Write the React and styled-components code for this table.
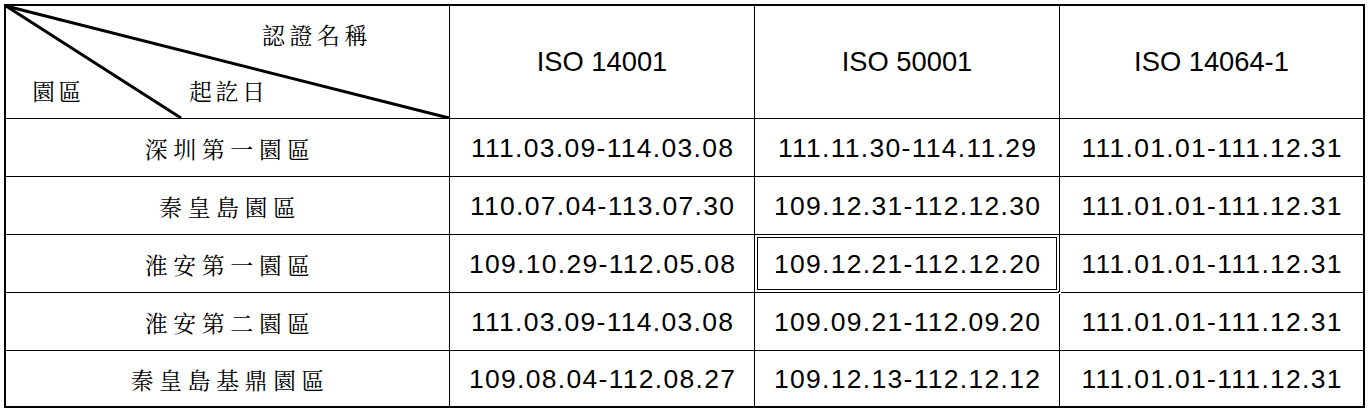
import React from "react";
import styled, { createGlobalStyle } from "styled-components";

const Global = createGlobalStyle`
  html, body { margin: 0; padding: 0; background: #ffffff; }
  body { font-family: "Liberation Sans", Arial, sans-serif; color: #000; }
`;

const Frame = styled.div`
  margin: 4px 0 0 4px;
  width: 1357px;
  border: 2px solid #000;
  display: grid;
  grid-template-columns: 443px 304px 304px 303px;
  grid-template-rows: 112px 57px 57px 57px 57px 55px;
  gap: 1px;
  background: #000;
`;

const Cell = styled.div`
  background: #fff;
  display: flex;
  align-items: center;
  justify-content: center;
  position: relative;
  ${(p) => p.$selected && `outline: 1px solid #000; outline-offset: -3px;`}
`;

const CornerCell = styled.div`
  background: #fff;
  position: relative;
  display: flex;
  flex-direction: column;
  padding: 14px 0 0 26px;
  box-sizing: border-box;
`;

const Diagonal = styled.svg`
  position: absolute;
  left: 0;
  top: 0;
  overflow: visible;
`;

const CjkText = styled.span`
  font-family: "Noto Serif CJK TC", "Noto Sans CJK TC", sans-serif;
  font-size: ${(p) => p.$size || 22}px;
  line-height: 30px;
  letter-spacing: ${(p) => p.$spacing || 5}px;
  white-space: nowrap;
`;

const TopLabel = styled(CjkText)`
  margin-left: 230px;
`;

const BottomLine = styled.div`
  display: flex;
  margin-top: 26px;
  gap: 104px;
`;

const HeadText = styled.span`
  font-family: "Liberation Sans", Arial, sans-serif;
  font-size: 27.3px;
  white-space: nowrap;
`;

const DateText = styled.span`
  font-family: "Liberation Sans", Arial, sans-serif;
  font-size: 26.5px;
  letter-spacing: 1.3px;
  margin-right: -1.3px;
  padding-top: 2px;
  white-space: nowrap;
`;

const RowLabel = styled(CjkText)`
  margin-right: -5.5px;
  padding-top: 3px;
`;

const Handle = styled.span`
  position: absolute;
  right: -3px;
  bottom: -3px;
  width: 4px;
  height: 4px;
  background: #fff;
  border: 1px solid #000;
  box-sizing: border-box;
`;

const rows = [
  ["深圳第一園區", "111.03.09-114.03.08", "111.11.30-114.11.29", "111.01.01-111.12.31"],
  ["秦皇島園區", "110.07.04-113.07.30", "109.12.31-112.12.30", "111.01.01-111.12.31"],
  ["淮安第一園區", "109.10.29-112.05.08", "109.12.21-112.12.20", "111.01.01-111.12.31"],
  ["淮安第二園區", "111.03.09-114.03.08", "109.09.21-112.09.20", "111.01.01-111.12.31"],
  ["秦皇島基鼎園區", "109.08.04-112.08.27", "109.12.13-112.12.12", "111.01.01-111.12.31"],
];

export default function App() {
  return (
    <>
      <Global />
      <Frame>
        <CornerCell>
          <Diagonal width="443" height="112" viewBox="0 0 443 112">
            <line x1="0" y1="0" x2="443" y2="112" stroke="#000" strokeWidth="3" />
            <line x1="0" y1="0" x2="175" y2="112" stroke="#000" strokeWidth="3" />
          </Diagonal>
          <TopLabel $size={23} $spacing={4.5}>認證名稱</TopLabel>
          <BottomLine>
            <CjkText $size={23} $spacing={3.5}>園區</CjkText>
            <CjkText $size={23} $spacing={3.5}>起訖日</CjkText>
          </BottomLine>
        </CornerCell>
        <Cell><HeadText>ISO 14001</HeadText></Cell>
        <Cell><HeadText>ISO 50001</HeadText></Cell>
        <Cell><HeadText>ISO 14064-1</HeadText></Cell>
        {rows.map((r, i) => (
          <React.Fragment key={i}>
            <Cell><RowLabel $size={23} $spacing={5.5}>{r[0]}</RowLabel></Cell>
            <Cell><DateText>{r[1]}</DateText></Cell>
            <Cell $selected={i === 2}>
              <DateText>{r[2]}</DateText>
              {i === 2 && <Handle />}
            </Cell>
            <Cell><DateText>{r[3]}</DateText></Cell>
          </React.Fragment>
        ))}
      </Frame>
    </>
  );
}
